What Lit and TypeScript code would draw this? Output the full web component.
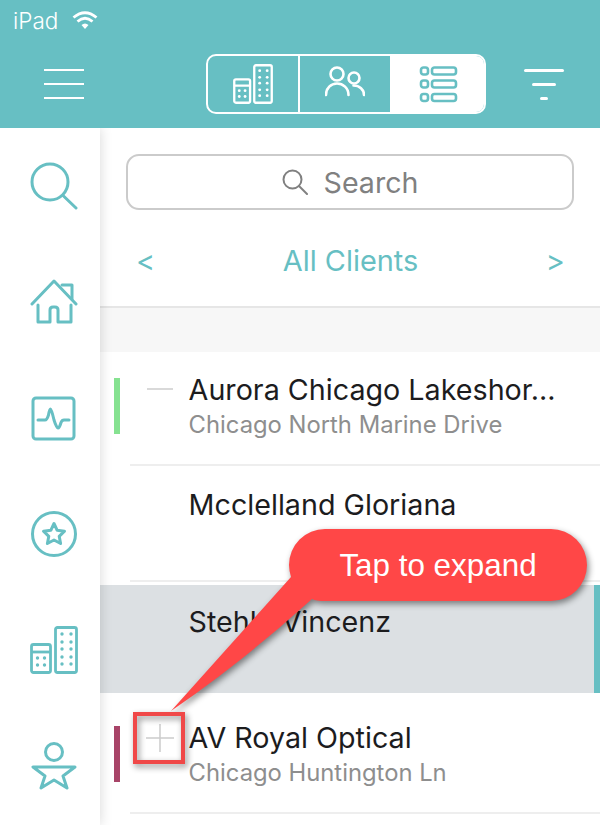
import { css, html, LitElement, svg } from "lit";
import { customElement } from "lit/decorators.js";

const rows = [
  { cls: "r1", name: "Aurora Chicago Lakeshor...", sub: "Chicago North Marine Drive", bar: "#86e291", mark: "minus" },
  { cls: "r2", name: "Mcclelland Gloriana", sub: "", bar: "", mark: "" },
  { cls: "r3 selected", name: "Stehle Vincenz", sub: "", bar: "", mark: "" },
  { cls: "r4", name: "AV Royal Optical", sub: "Chicago Huntington Ln", bar: "#a84468", mark: "plus" },
];

const dots = (xs: number[], ys: number[]) =>
  xs.flatMap((x) => ys.map((y) => svg`<circle cx=${x} cy=${y} r="1.700" fill="currentColor" stroke="none"></circle>`));

const buildings = html`
  <svg viewBox="0 0 48 48" fill="none" stroke="currentColor" stroke-width="2.800" stroke-linejoin="round">
    <rect x="1.500" y="18.500" width="19" height="28" rx="2"></rect>
    <path d="M1.500 26h19"></path>
    <rect x="25.500" y="1.500" width="21" height="45" rx="2"></rect>
    ${dots([32, 41], [8, 16, 23, 31, 38])}
    ${dots([7.500, 14.500], [32, 39])}
  </svg>
`;

const sideIcons = [
  html`<svg viewBox="0 0 48 48" fill="none" stroke="currentColor" stroke-width="3" stroke-linecap="round">
    <circle cx="20" cy="20" r="18"></circle><path d="M33.500 34L46 46"></path></svg>`,
  html`<svg viewBox="0 0 48 48" fill="none" stroke="currentColor" stroke-width="3" stroke-linecap="round" stroke-linejoin="round">
    <path d="M2 26L24 3L46 26"></path><path d="M32 7h10v14"></path>
    <path d="M8 27V44H20V32q0-3 3-3h2q3 0 3 3V44H41V27"></path></svg>`,
  html`<svg viewBox="0 0 48 48" fill="none" stroke="currentColor" stroke-width="3" stroke-linecap="round" stroke-linejoin="round">
    <rect x="3" y="4" width="41" height="41" rx="3"></rect>
    <path d="M8 26h7Q17 26 18.500 21Q19.500 15 20.500 15Q21.500 15 24 26Q26.500 34 28 34Q29.500 34 31 28.500Q32 26 34 26h5"></path></svg>`,
  html`<svg viewBox="0 0 48 48" fill="none" stroke="currentColor" stroke-width="3" stroke-linejoin="round">
    <circle cx="24" cy="24" r="21.500"></circle>
    <path d="M24 13.500L27.200 20.300L34.500 21.200L29.200 26.300L30.600 33.500L24 30L17.400 33.500L18.800 26.300L13.500 21.200L20.800 20.300Z"></path></svg>`,
  buildings,
  html`<svg viewBox="0 0 48 48" fill="none" stroke="currentColor" stroke-width="3" stroke-linejoin="round">
    <circle cx="24" cy="10" r="8.500"></circle>
    <path d="M3 25H45L33 34L37 46L24 38L11 46L15 34Z"></path></svg>`,
];

@customElement("app-root")
export class AppRoot extends LitElement {
  static styles = css`
    :host {
      display: block;
      position: relative;
      width: 600px;
      height: 825px;
      overflow: hidden;
      background: #fff;
      font-family: Inter, "Liberation Sans", sans-serif;
    }

    .header {
      height: 128px;
      box-sizing: border-box;
      background: #67bfc3;
      color: #fff;
      position: relative;
      z-index: 2;
    }

    .status {
      height: 54px;
      box-sizing: border-box;
      padding: 7px 0 0 13px;
      display: flex;
      gap: 14px;
      font-size: 22.500px;
      line-height: 28px;
      font-weight: 300;
    }

    .status svg {
      width: 26px;
      height: 20px;
      margin-top: 3px;
    }

    .toolbar {
      display: flex;
      align-items: center;
      height: 60px;
      padding-left: 44px;
    }

    .burger {
      display: flex;
      flex-direction: column;
      gap: 12px;
      margin-right: 122px;
    }

    .burger i {
      display: block;
      width: 40px;
      height: 2px;
      background: #fff;
    }

    .segments {
      display: grid;
      grid-template-columns: 92px 92px 1fr;
      width: 280px;
      height: 60px;
      box-sizing: border-box;
      border: 2px solid #fff;
      border-radius: 10px;
      overflow: hidden;
      margin-right: 38px;
    }

    .segment {
      display: flex;
      justify-content: center;
      align-items: center;
      border-right: 2px solid #fff;
    }

    .segment.active {
      background: #fff;
      color: #67bfc3;
      border-right: 0;
    }

    .segment svg {
      width: 40px;
      height: 40px;
    }

    .funnel {
      display: flex;
      flex-direction: column;
      align-items: center;
      gap: 11px;
    }

    .funnel i {
      display: block;
      height: 3px;
      background: #fff;
      border-radius: 2px;
    }

    .funnel i:nth-child(1) { width: 40px; }
    .funnel i:nth-child(2) { width: 24px; }
    .funnel i:nth-child(3) { width: 8px; }

    .body {
      display: flex;
      height: 697px;
    }

    .side {
      width: 100px;
      flex: none;
      box-sizing: border-box;
      padding-left: 8px;
      display: grid;
      grid-auto-rows: 116px;
      justify-items: center;
      align-items: center;
      background: #fff;
      color: #67bfc3;
      box-shadow: 0 0 12px rgba(0, 0, 0, 0.16);
      position: relative;
      z-index: 1;
    }

    .side svg {
      width: 48px;
      height: 48px;
    }

    .main {
      flex: 1;
      min-width: 0;
    }

    .search {
      margin: 26px 26px 0;
      height: 56px;
      box-sizing: border-box;
      border: 2px solid #cbcbcb;
      border-radius: 13px;
      display: flex;
      justify-content: center;
      align-items: center;
      gap: 16px;
      color: #808080;
      font-size: 28.600px;
    }

    .search svg {
      width: 26px;
      height: 26px;
    }

    .nav {
      display: flex;
      justify-content: space-between;
      align-items: center;
      height: 96px;
      box-sizing: border-box;
      padding: 4px 35px 0 36px;
      color: #67bfc3;
      font-size: 28.900px;
    }

    .band {
      height: 44px;
      background: #f7f7f7;
      border-top: 2px solid #e6e6e6;
    }

    .row {
      display: flex;
      box-sizing: border-box;
      padding-left: 14px;
      color: #1c1c1e;
      position: relative;
    }

    .r1 { height: 114px; --top: 21px; --bar: 26px; }
    .r2 { height: 116px; --top: 22px; }
    .r3 { height: 108px; margin-top: 3px; --top: 20px; background: #dce0e3; }
    .r4 { height: 121px; --top: 28px; --bar: 33px; }

    .selected::after {
      content: "";
      position: absolute;
      top: 0;
      right: 0;
      bottom: 0;
      width: 6px;
      background: #67bfc3;
    }

    .bar {
      flex: none;
      width: 6px;
      height: 56px;
      margin-top: var(--bar, 0);
    }

    .content {
      flex: 1;
      min-width: 0;
      margin-left: 10px;
      padding: var(--top) 0 0 58.600px;
      border-bottom: 2px solid #eeeeee;
      position: relative;
    }

    .selected .content {
      border-bottom: 0;
    }

    .name {
      font-size: 28.700px;
      line-height: 34px;
      white-space: nowrap;
    }

    .sub {
      font-size: 23.800px;
      line-height: 30px;
      margin-top: 3px;
      color: #8e8e8e;
    }

    .mark {
      position: absolute;
      left: 16px;
      width: 28px;
      height: 28px;
    }

    .minus { top: 23px; }
    .plus { top: 31px; }

    .callout {
      position: absolute;
      inset: 0;
      z-index: 3;
      pointer-events: none;
    }

    .callout svg {
      display: block;
      width: 600px;
      height: 825px;
    }

    .callout-shape {
      filter: drop-shadow(2px 3px 3px rgba(0, 0, 0, 0.45));
    }

    .callout-text {
      position: absolute;
      left: 289px;
      top: 530px;
      width: 298px;
      height: 72px;
      display: flex;
      justify-content: center;
      align-items: center;
      color: #fff;
      font-family: "Liberation Sans", Arial, sans-serif;
      font-size: 31.400px;
    }
  `;

  render() {
    return html`
      <div class="header">
        <div class="status">
          <span>iPad</span>
          <svg viewBox="0 0 26 20" fill="none" stroke="#fff" stroke-width="2.800">
            <path d="M1.500 7.500Q13 -2 24.500 7.500"></path>
            <path d="M5.500 11.500Q13 5 20.500 11.500"></path>
            <path d="M9.500 15Q13 12 16.500 15L13 19Z" fill="#fff" stroke="none"></path>
          </svg>
        </div>
        <div class="toolbar">
          <div class="burger"><i></i><i></i><i></i></div>
          <div class="segments">
            <div class="segment">${buildings}</div>
            <div class="segment">
              <svg viewBox="0 0 40 40" fill="none" stroke="currentColor" stroke-width="2.600" stroke-linecap="round">
                <circle cx="12" cy="10" r="6.500"></circle>
                <path d="M1 31C1 24 6 19.500 12 19.500C18 19.500 23.500 24 23.500 31"></path>
                <circle cx="29" cy="14" r="5.500"></circle>
                <path d="M28.500 21.500C34.500 21.500 39 25.500 39 31"></path>
              </svg>
            </div>
            <div class="segment active">
              <svg viewBox="0 0 40 40" fill="none" stroke="currentColor" stroke-width="2.600">
                <rect x="3" y="3.500" width="7" height="7" rx="2.500"></rect>
                <rect x="14" y="3.500" width="24" height="7" rx="2.500"></rect>
                <rect x="3" y="16.500" width="7" height="7" rx="2.500"></rect>
                <rect x="14" y="16.500" width="24" height="7" rx="2.500"></rect>
                <rect x="3" y="30" width="7" height="7" rx="2.500"></rect>
                <rect x="14" y="30" width="24" height="7" rx="2.500"></rect>
              </svg>
            </div>
          </div>
          <div class="funnel"><i></i><i></i><i></i></div>
        </div>
      </div>

      <div class="body">
        <div class="side">${sideIcons}</div>
        <div class="main">
          <div class="search">
            <svg viewBox="0 0 26 26" fill="none" stroke="currentColor" stroke-width="2" stroke-linecap="round">
              <circle cx="10.500" cy="10.500" r="9"></circle>
              <path d="M17 17L25 25"></path>
            </svg>
            <span>Search</span>
          </div>
          <div class="nav"><span>&lt;</span><span>All Clients</span><span>&gt;</span></div>
          <div class="band"></div>
          ${rows.map((row) => this.renderRow(row))}
        </div>
      </div>

      <div class="callout">
        <svg viewBox="0 0 600 825">
          <g class="callout-shape">
            <rect x="135" y="714" width="48" height="48" fill="none" stroke="#f04848" stroke-width="4"></rect>
            <path
              fill="#ff4747"
              d="M325 529H551A36 36 0 0 1 551 601H325Q316 601 312 599Q245 660 171 711L291 577Q289 570 289 565A36 36 0 0 1 325 529Z"
            ></path>
          </g>
        </svg>
        <div class="callout-text">Tap to expand</div>
      </div>
    `;
  }

  private renderRow(row: (typeof rows)[number]) {
    return html`
      <div class="row ${row.cls}">
        <div class="bar" style="background: ${row.bar || "transparent"}"></div>
        <div class="content">
          ${row.mark === "minus"
            ? html`<svg class="mark minus" viewBox="0 0 28 28" stroke="#cccccc" stroke-width="1.500"><path d="M1 14H27"></path></svg>`
            : null}
          ${row.mark === "plus"
            ? html`<svg class="mark plus" viewBox="0 0 28 28" stroke="#cccccc" stroke-width="1.500"><path d="M0 14H28M14 0V28"></path></svg>`
            : null}
          <div class="name">${row.name}</div>
          ${row.sub ? html`<div class="sub">${row.sub}</div>` : null}
        </div>
      </div>
    `;
  }
}

declare global {
  interface HTMLElementTagNameMap {
    "app-root": AppRoot;
  }
}
